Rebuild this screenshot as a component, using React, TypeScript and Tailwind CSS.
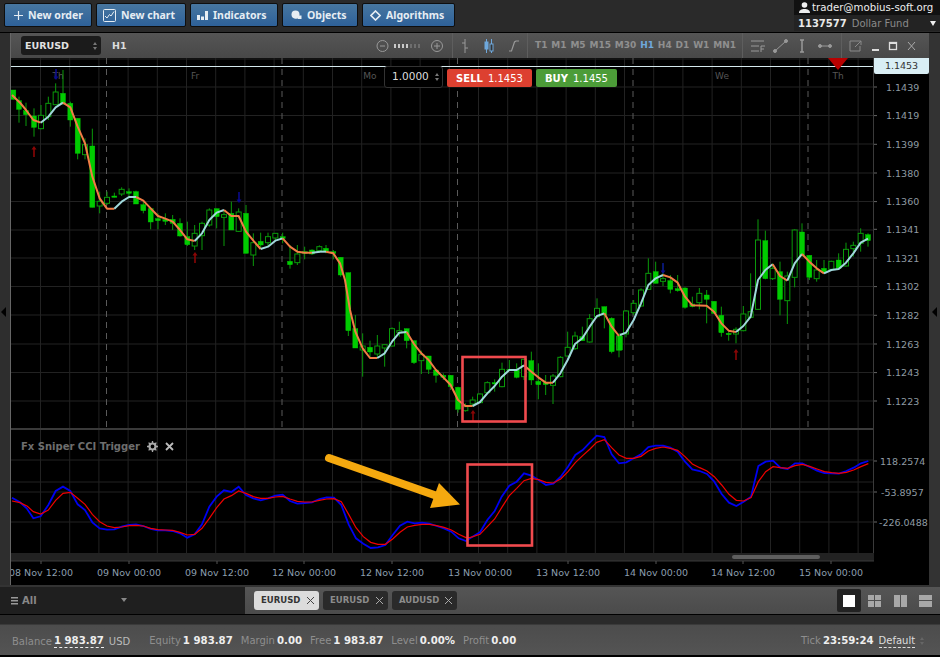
import React from "react";

type Candle = [number, number, number, number, number, number];
type Pt = [number, number];

// chart data is read off in 3x crop units, each section has its own origin
const toScreen = (ox: number, oy: number, rows: Candle[]) =>
  rows.map(([x, t, b, h, l, f]) => ({
    x: ox + x / 3,
    top: oy + t / 3,
    bottom: oy + b / 3,
    high: oy + h / 3,
    low: oy + l / 3,
    filled: f === 1,
  }));

const candles = [
  ...toScreen(0, 70, [
    [40, 60, 88, 60, 88, 1], [57, 92, 118, 80, 158, 1], [78, 122, 134, 98, 168, 1], [102, 138, 172, 115, 200, 1],
    [123, 136, 176, 105, 178, 0], [145, 100, 140, 80, 150, 0], [167, 66, 104, 40, 105, 0], [189, 70, 100, 0, 105, 1],
    [211, 100, 150, 95, 170, 1], [233, 145, 250, 145, 268, 1], [255, 224, 254, 205, 268, 0], [277, 228, 412, 176, 412, 1],
    [299, 394, 408, 365, 430, 0], [321, 382, 400, 365, 405, 0], [343, 378, 382, 368, 382, 1], [365, 358, 372, 352, 378, 0],
    [387, 365, 370, 355, 385, 1], [408, 365, 402, 362, 402, 1], [430, 404, 422, 396, 430, 1], [452, 416, 456, 416, 478, 1],
    [474, 446, 452, 430, 478, 1], [496, 448, 454, 430, 465, 1], [518, 448, 460, 435, 480, 1], [540, 460, 498, 445, 500, 1],
    [562, 500, 524, 455, 528, 1], [584, 490, 528, 465, 540, 0], [606, 460, 497, 455, 540, 0], [628, 420, 465, 415, 470, 0],
    [650, 416, 440, 416, 475, 1], [672, 434, 442, 420, 528, 0], [694, 430, 480, 395, 480, 1], [716, 426, 484, 415, 486, 0],
    [738, 430, 550, 405, 550, 1], [760, 518, 555, 490, 588, 0], [782, 514, 525, 488, 535, 1], [804, 500, 518, 488, 530, 0],
    [826, 490, 504, 490, 510, 0], [848, 500, 506, 488, 520, 1], [870, 574, 584, 525, 596, 1], [892, 552, 578, 525, 585, 0],
    [914, 545, 550, 530, 568, 1], [936, 540, 552, 538, 555, 1], [958, 530, 542, 526, 548, 0],
  ]),
  ...toScreen(320, 220, [
    [18, 85, 95, 75, 100, 1], [40, 95, 100, 90, 118, 1], [62, 112, 165, 112, 170, 1], [85, 158, 332, 158, 348, 1],
    [106, 326, 384, 285, 384, 1], [128, 378, 390, 340, 470, 0], [150, 382, 396, 362, 415, 1], [172, 378, 402, 345, 415, 0],
    [194, 374, 384, 374, 440, 0], [216, 326, 378, 322, 380, 0], [238, 332, 338, 305, 350, 0], [260, 326, 362, 326, 385, 1],
    [282, 362, 428, 362, 432, 1], [304, 404, 422, 392, 462, 0], [326, 408, 448, 408, 462, 1], [348, 450, 466, 448, 488, 1],
    [370, 466, 472, 460, 480, 1], [392, 466, 500, 465, 510, 1], [414, 502, 568, 500, 578, 1], [436, 560, 572, 550, 575, 0],
    [458, 540, 552, 530, 560, 0], [480, 522, 548, 520, 550, 0], [502, 488, 518, 484, 520, 0], [524, 488, 492, 478, 515, 1],
    [546, 448, 500, 428, 502, 0], [568, 448, 452, 420, 452, 1], [590, 450, 472, 430, 475, 1], [612, 418, 470, 418, 480, 0],
    [634, 422, 480, 395, 495, 1], [655, 484, 494, 430, 538, 1], [677, 488, 494, 465, 525, 1], [699, 468, 496, 462, 552, 0],
    [721, 412, 470, 408, 472, 0], [743, 382, 408, 335, 410, 0], [765, 348, 386, 335, 390, 0], [787, 350, 362, 320, 362, 1],
    [809, 296, 366, 282, 368, 0], [831, 265, 290, 235, 295, 0], [853, 260, 285, 260, 325, 1], [875, 295, 395, 292, 400, 1],
    [897, 348, 390, 340, 412, 0],
  ]),
  ...toScreen(620, 200, [
    [0, 408, 450, 400, 452, 1], [18, 333, 402, 330, 412, 0], [41, 310, 338, 300, 345, 0], [63, 270, 318, 265, 320, 0],
    [85, 220, 268, 175, 270, 0], [107, 215, 250, 185, 250, 1], [129, 236, 244, 190, 258, 0], [151, 242, 268, 225, 280, 1],
    [173, 266, 272, 225, 275, 1], [195, 264, 322, 262, 326, 1], [217, 312, 320, 290, 322, 1], [238, 280, 308, 264, 328, 0],
    [260, 285, 298, 270, 370, 1], [282, 304, 340, 304, 342, 1], [304, 346, 398, 320, 410, 1], [326, 400, 404, 395, 422, 1],
    [348, 388, 402, 382, 430, 0], [370, 342, 392, 318, 394, 0], [392, 335, 352, 220, 355, 0], [414, 120, 328, 58, 330, 0],
    [436, 122, 236, 92, 238, 1], [458, 205, 236, 190, 240, 0], [480, 215, 298, 185, 346, 1], [502, 228, 302, 215, 372, 0],
    [524, 90, 232, 88, 262, 0], [546, 96, 166, 70, 170, 1], [568, 166, 232, 166, 240, 1], [590, 210, 236, 180, 245, 0],
    [612, 205, 218, 180, 220, 1], [634, 184, 208, 182, 210, 0], [656, 180, 205, 160, 210, 1], [678, 148, 198, 128, 200, 0],
    [700, 136, 146, 125, 170, 0], [722, 100, 130, 85, 155, 0], [744, 104, 122, 100, 140, 1],
  ]),
];

const shift = (ox: number, oy: number, pts: Pt[]) =>
  pts.map(([x, y]) => `${ox + x / 3},${oy + y / 3}`).join(" ");

const ORANGE = "#f27c45";
const PALE = "#a0d8dc";

const trend: { color: string; points: string }[] = [
  { color: ORANGE, points: shift(0, 70, [[36, 75], [60, 98], [78, 120], [100, 150], [122, 158]]) },
  { color: PALE, points: shift(0, 70, [[122, 158], [145, 140], [167, 112], [189, 98]]) },
  { color: ORANGE, points: shift(0, 70, [[189, 98], [211, 112], [233, 170], [255, 220], [277, 320], [299, 385], [321, 416], [343, 416]]) },
  { color: PALE, points: shift(0, 70, [[343, 416], [365, 395], [387, 381], [408, 381]]) },
  { color: ORANGE, points: shift(0, 70, [[408, 381], [430, 392], [452, 415], [474, 438], [496, 446], [518, 455], [540, 480], [562, 508], [584, 513]]) },
  { color: PALE, points: shift(0, 70, [[584, 513], [606, 490], [628, 450], [650, 428], [672, 420]]) },
  { color: ORANGE, points: shift(0, 70, [[672, 420], [694, 438], [716, 438], [738, 485], [760, 512], [782, 537]]) },
  { color: PALE, points: shift(0, 70, [[782, 537], [804, 530], [826, 512], [848, 505]]) },
  { color: ORANGE, points: shift(0, 70, [[848, 505], [870, 530], [892, 545], [914, 548], [936, 548]]) },
  { color: PALE, points: shift(0, 70, [[936, 548], [960, 545]]) },
  { color: PALE, points: shift(320, 220, [[0, 95], [18, 95]]) },
  { color: ORANGE, points: shift(320, 220, [[18, 95], [40, 100], [60, 130], [75, 180], [90, 270], [106, 335], [128, 385], [150, 414], [172, 414]]) },
  { color: PALE, points: shift(320, 220, [[172, 414], [194, 400], [216, 365], [238, 338], [260, 336]]) },
  { color: ORANGE, points: shift(320, 220, [[260, 336], [282, 372], [304, 400], [326, 420], [348, 450], [370, 472], [392, 495], [414, 540], [436, 558], [458, 558]]) },
  { color: PALE, points: shift(320, 220, [[458, 558], [480, 546], [502, 520], [524, 498], [546, 470], [568, 450], [590, 450], [612, 436]]) },
  { color: ORANGE, points: shift(320, 220, [[612, 436], [634, 455], [655, 472], [677, 488], [699, 488]]) },
  { color: PALE, points: shift(320, 220, [[699, 488], [721, 460], [743, 420], [765, 372], [787, 355], [809, 320], [831, 288], [853, 280]]) },
  { color: ORANGE, points: shift(320, 220, [[853, 280], [875, 320], [897, 348]]) },
  { color: PALE, points: shift(620, 200, [[0, 405], [18, 398], [41, 360], [63, 310], [85, 255], [107, 235], [129, 225]]) },
  { color: ORANGE, points: shift(620, 200, [[129, 225], [151, 232], [173, 248], [195, 290], [217, 316], [260, 317], [282, 335], [304, 370], [326, 392], [348, 396]]) },
  { color: PALE, points: shift(620, 200, [[348, 396], [370, 378], [392, 350], [414, 240], [436, 210], [458, 193]]) },
  { color: ORANGE, points: shift(620, 200, [[458, 193], [480, 228], [502, 242]]) },
  { color: PALE, points: shift(620, 200, [[502, 242], [524, 190], [546, 162]]) },
  { color: ORANGE, points: shift(620, 200, [[546, 162], [568, 185], [590, 205], [612, 220]]) },
  { color: PALE, points: shift(620, 200, [[612, 220], [634, 210], [656, 207], [678, 188], [700, 160], [722, 128], [744, 116]]) },
];

const cciBlue =
  shift(0, 425, [[36, 218], [60, 232], [80, 250], [100, 280], [122, 274], [145, 240], [167, 198], [189, 185], [211, 198], [233, 238], [255, 255], [277, 292], [299, 310], [321, 314], [343, 313], [365, 305], [387, 300], [408, 298], [430, 303], [452, 312], [474, 316], [496, 316], [518, 318], [540, 325], [562, 338], [584, 328], [606, 298], [628, 245], [650, 215], [672, 196], [694, 201], [716, 185], [738, 210], [760, 220], [782, 226], [804, 220], [826, 212], [848, 209], [870, 228], [892, 236], [914, 234], [936, 232], [958, 222], [980, 217], [1002, 218], [1024, 240], [1046, 298], [1068, 340], [1090, 356], [1112, 369], [1134, 367], [1156, 360], [1178, 330], [1200, 302], [1222, 290], [1244, 295], [1266, 293], [1288, 296], [1310, 303], [1332, 310], [1354, 320], [1376, 340], [1398, 348]]) +
  " " +
  shift(470, 425, [[0, 340], [30, 322], [52, 285], [74, 258], [95, 215], [118, 182], [140, 170], [162, 145], [184, 152], [206, 165], [228, 180], [250, 176], [272, 155], [294, 125], [316, 90], [338, 75], [360, 52], [380, 32], [403, 36], [425, 88], [447, 115], [469, 112], [491, 100], [513, 88], [535, 66], [557, 62], [579, 62], [601, 68], [623, 80], [645, 110], [667, 133], [689, 138], [711, 147], [733, 170], [755, 207], [777, 233], [799, 243], [821, 230], [843, 215], [865, 123], [887, 110], [909, 107], [931, 128], [953, 132], [975, 115], [997, 115], [1019, 126], [1041, 137], [1063, 144], [1085, 145], [1107, 146], [1129, 138], [1151, 128], [1173, 115], [1195, 108]]);

const cciRed =
  shift(0, 425, [[36, 228], [60, 233], [82, 244], [100, 260], [122, 267], [145, 255], [167, 226], [189, 205], [211, 202], [233, 220], [255, 238], [277, 268], [299, 290], [321, 303], [343, 308], [365, 306], [387, 302], [408, 301], [430, 303], [452, 310], [474, 314], [496, 315], [518, 316], [540, 322], [562, 330], [584, 328], [606, 310], [628, 280], [650, 248], [672, 222], [694, 212], [716, 198], [738, 205], [760, 215], [782, 220], [804, 220], [826, 216], [848, 214], [870, 222], [892, 229], [914, 231], [936, 231], [958, 226], [980, 222], [1002, 221], [1024, 230], [1046, 268], [1068, 308], [1090, 335], [1112, 352], [1134, 358], [1156, 358], [1178, 342], [1200, 322], [1222, 306], [1244, 301], [1266, 298], [1288, 298], [1310, 302], [1332, 307], [1354, 315], [1376, 328], [1398, 338]]) +
  " " +
  shift(470, 425, [[0, 338], [30, 328], [52, 305], [74, 282], [95, 248], [118, 212], [140, 190], [162, 167], [184, 160], [206, 164], [228, 172], [250, 174], [272, 162], [294, 140], [316, 113], [338, 92], [360, 72], [380, 52], [403, 44], [425, 68], [447, 90], [469, 100], [491, 100], [513, 94], [535, 78], [557, 70], [579, 66], [601, 70], [623, 76], [645, 95], [667, 117], [689, 128], [711, 138], [733, 155], [755, 180], [777, 208], [799, 226], [821, 228], [843, 218], [865, 170], [887, 140], [909, 125], [931, 128], [953, 130], [975, 122], [997, 118], [1019, 124], [1041, 132], [1063, 140], [1085, 143], [1107, 145], [1129, 142], [1151, 135], [1173, 125], [1195, 116]]);

const prices: [string, number][] = [
  ["1.1439", 87], ["1.1419", 115.6], ["1.1399", 144.3], ["1.1380", 173], ["1.1360", 201.6], ["1.1341", 229.3],
  ["1.1321", 258], ["1.1302", 286.6], ["1.1282", 315.3], ["1.1263", 344], ["1.1243", 372.6], ["1.1223", 401],
];
const hGrid = [59, 87, 115.5, 144, 173, 201.5, 230, 258, 286.5, 315, 344, 372.5, 401, 460, 482, 492, 522];
const vGrid = Array.from({ length: 29 }, (_, i) => 40.5 + i * 29.2);
const dayLines = [106.5, 282, 457.5, 633, 808];
const days: [string, number][] = [["Th", 58], ["Fr", 195], ["Mo", 370], ["We", 722], ["Th", 838]];
const times: [string, number][] = [
  ["08 Nov 12:00", 41], ["09 Nov 00:00", 129], ["09 Nov 12:00", 217], ["12 Nov 00:00", 304], ["12 Nov 12:00", 392],
  ["13 Nov 00:00", 480], ["13 Nov 12:00", 568], ["14 Nov 00:00", 656], ["14 Nov 12:00", 743], ["15 Nov 00:00", 831],
];
const upArrows: [number, number][] = [[34, 146], [195, 252], [473, 410], [736, 349]];
const downArrows: [number, number][] = [[56, 69], [239, 192], [663, 263]];

function Chart() {
  return (
    <svg viewBox="11 58 918 527" className="absolute inset-0 w-[918px] h-[527px] font-['DejaVu_Sans']">
      {hGrid.map((y) => (
        <line key={y} x1={11} x2={873} y1={y} y2={y} stroke="#222" />
      ))}
      {vGrid.map((x) => (
        <line key={x} x1={x} x2={x} y1={58} y2={553} stroke="#222" />
      ))}
      {dayLines.map((x) => (
        <line key={x} x1={x} x2={x} y1={58} y2={428} stroke="#5a5a5a" strokeDasharray="6 5" />
      ))}
      {days.map(([d, x]) => (
        <text key={x} x={x} y={79} textAnchor="middle" fontSize={9} fill="#565656">
          {d}
        </text>
      ))}

      {candles.map((c, i) => (
        <g key={i}>
          <line x1={c.x} x2={c.x} y1={c.high} y2={c.low} stroke="#0a9a0a" />
          <rect
            x={c.x - 2.5}
            y={c.top}
            width={5}
            height={Math.max(c.bottom - c.top, 1)}
            fill={c.filled ? "#00cc00" : "#000"}
            stroke={c.filled ? "#00cc00" : "#0a9a0a"}
            strokeWidth={c.filled ? 0.4 : 1}
          />
        </g>
      ))}
      {trend.map((t, i) => (
        <polyline key={i} points={t.points} fill="none" stroke={t.color} strokeWidth={2} strokeLinejoin="round" />
      ))}

      {upArrows.map(([x, y]) => (
        <path key={x} d={`M${x} ${y}l-2.5 3.5h1.7v7.5h1.6v-7.5h1.7z`} fill="#8a0606" />
      ))}
      {downArrows.map(([x, y]) => (
        <path key={x} d={`M${x} ${y + 11}l-2.5 -3.5h1.7v-7.5h1.6v7.5h1.7z`} fill="#0a0a8c" />
      ))}

      <line x1={11} x2={873} y1={66.5} y2={66.5} stroke="#d4e8ec" />
      <path d="M828 58h20l-10 12z" fill="#b80000" />

      {/* axes */}
      <line x1={873.5} x2={873.5} y1={58} y2={561} stroke="#3a3a3a" />
      <rect x={11} y={428} width={863} height={2} fill="#3a3a3a" />
      <rect x={11} y={553} width={863} height={8} fill="#222" />
      <rect x={732} y={555} width={88} height={4} rx={2} fill="#5e5e5e" />
      <line x1={11} x2={874} y1={561} y2={561} stroke="#3a3a3a" />
      {prices.map(([p, y]) => (
        <g key={p}>
          <line x1={874} x2={877} y1={y} y2={y} stroke="#666" />
          <text x={886} y={y + 3.5} fontSize={9.5} fill="#8f9ba3">
            {p}
          </text>
        </g>
      ))}
      {([["118.2574", 461, 880], ["-53.8957", 492, 881], ["-226.0488", 522, 879]] as [string, number, number][]).map(
        ([p, y, x]) => (
          <g key={p}>
            <line x1={874} x2={877} y1={y} y2={y} stroke="#666" />
            <text x={x} y={y + 3.5} fontSize={9.5} fill="#8f9ba3">
              {p}
            </text>
          </g>
        ),
      )}
      {times.map(([t, x]) => (
        <g key={t}>
          <line x1={x} x2={x} y1={561} y2={564} stroke="#555" />
          <text x={x} y={576} textAnchor="middle" fontSize={9.5} fill="#8b9eae">
            {t}
          </text>
        </g>
      ))}

      {/* indicator */}
      <polyline points={cciBlue} fill="none" stroke="#0000f0" strokeWidth={1.8} />
      <polyline points={cciRed} fill="none" stroke="#f00000" strokeWidth={1.2} />

      {/* annotations */}
      <rect x={462.5} y={357} width={63} height={64.5} fill="none" stroke="#f04a4e" strokeWidth={2.6} />
      <rect x={467.5} y={464.5} width={64.5} height={81} fill="none" stroke="#f04a4e" strokeWidth={2.6} />
      <line x1={329} y1={458} x2={440} y2={497} stroke="#f5a90f" strokeWidth={8} strokeLinecap="round" />
      <path d="M439 483L460 504.5L430 508z" fill="#f5a90f" />
    </svg>
  );
}

function ToolButton({ icon, label, className }: { icon: React.ReactNode; label: string; className: string }) {
  return (
    <button
      className={`h-[24px] flex items-center gap-[5px] rounded-[2px] border border-[#0e0e0e] bg-gradient-to-b from-[#47769f] to-[#2e6199] font-['Noto_Sans'] text-[10.5px] font-bold text-[#e6edf3] ${className}`}
    >
      {icon}
      <span className="mt-px">{label}</span>
    </button>
  );
}

function Stat({ label, value, className = "" }: { label: string; value: string; className?: string }) {
  return (
    <span className={`flex items-baseline gap-[2px] ${className}`}>
      <span className="text-[10px] text-[#8e8e8e]">{label}</span>
      <span className="text-[10.2px] font-bold text-[#eeeeee]">{value}</span>
    </span>
  );
}

const frames = ["T1", "M1", "M5", "M15", "M30", "H1", "H4", "D1", "W1", "MN1"];

export default function App() {
  return (
    <div className="w-[940px] h-[657px] overflow-hidden bg-black flex flex-col font-['DejaVu_Sans',sans-serif] text-[10px]">
      {/* Top toolbar */}
      <div className="h-[32px] flex items-start bg-[#2a2a2a] pl-[4px] pt-[3px] gap-[4px] relative">
        <ToolButton
          className="w-[88px] pl-[9px]"
          label="New order"
          icon={
            <svg width="9" height="9" viewBox="0 0 9 9" className="mt-[1px]">
              <path d="M4.5 0v9M0 4.5h9" stroke="#e6edf3" strokeWidth="1.2" />
            </svg>
          }
        />
        <ToolButton
          className="w-[90px] pl-[6px]"
          label="New chart"
          icon={
            <svg width="13" height="13" viewBox="0 0 13 13" fill="none" stroke="#e6edf3">
              <rect x=".5" y=".5" width="12" height="12" rx="1" />
              <path d="M2 7l2 2 2.5-3.5L8 7l3-4.5" />
            </svg>
          }
        />
        <ToolButton
          className="w-[88px] pl-[6px]"
          label="Indicators"
          icon={
            <svg width="11" height="10" viewBox="0 0 11 10" fill="#e6edf3">
              <rect y="5" width="3" height="5" />
              <rect x="4" y="6.5" width="3" height="3.5" />
              <rect x="8" y="1" width="3" height="9" />
            </svg>
          }
        />
        <ToolButton
          className="w-[76px] pl-[8px]"
          label="Objects"
          icon={
            <svg width="11" height="11" viewBox="0 0 11 11" fill="#e6edf3">
              <circle cx="4.5" cy="4.5" r="4" />
              <path d="M7 5.5h3.5V9H3.5V8.5H7z" />
            </svg>
          }
        />
        <ToolButton
          className="w-[93px] pl-[7px]"
          label="Algorithms"
          icon={
            <svg width="11" height="11" viewBox="0 0 11 11" fill="none" stroke="#e6edf3" strokeWidth="1.6">
              <path d="M5.5 1L10 5.5 5.5 10 1 5.5z" />
            </svg>
          }
        />
        <div className="absolute right-0 top-0 w-[146px] h-[31px] flex flex-col">
          <div className="h-[15px] bg-[#111] flex items-center pl-[5px] gap-[2px] text-[10.2px] text-[#eee]">
            <svg width="11" height="11" viewBox="0 0 11 11" fill="#eee">
              <circle cx="5.5" cy="3" r="2.8" />
              <path d="M0 11c0-3 2.5-4 5.5-4s5.5 1 5.5 4z" />
            </svg>
            trader@mobius-soft.org
          </div>
          <div className="h-[16px] bg-[#232323] flex items-center pl-[4px] text-[10px] relative">
            <span className="font-bold text-[#e8e8e8]">1137577</span>
            <span className="ml-[5px] text-[#8a8a8a]">Dollar Fund</span>
            <span className="absolute right-[4px] top-[6px] border-x-[3.5px] border-x-transparent border-t-[5px] border-t-[#eee]" />
          </div>
        </div>
      </div>
      <div className="h-px bg-black" />

      {/* Chart window */}
      <div className="flex h-[552px] shrink-0">
        <div className="w-[11px] bg-[#2e2e2e] border-r border-[#666] flex items-center justify-center">
          <span className="mt-[6px] mr-[3px] border-y-[5px] border-y-transparent border-r-[5px] border-r-black" />
        </div>
        <div className="w-[918px] flex flex-col">
          {/* Chart header */}
          <div className="h-[25px] shrink-0 bg-gradient-to-b from-[#555] to-[#484848] flex items-center text-[#8f8f8f] relative">
            <div className="ml-[10px] w-[80px] h-[19px] bg-[#1b1b1b] rounded-[3px] flex items-center justify-between pl-[4px] pr-[4px] text-[9.5px] font-bold text-[#e2e2e2]">
              <span className="mt-px">EURUSD</span>
              <span className="flex flex-col gap-[2px]">
                <span className="border-x-[2.5px] border-x-transparent border-b-[3px] border-b-[#777]" />
                <span className="border-x-[2.5px] border-x-transparent border-t-[3px] border-t-[#777]" />
              </span>
            </div>
            <span className="ml-[11px] mt-px text-[9.5px] font-bold text-[#ddd]">H1</span>

            <div className="absolute left-[365px] top-0 h-[25px] flex items-center">
              <svg width="72" height="14" viewBox="0 0 72 14" fill="none" stroke="#999">
                <circle cx="6.5" cy="7" r="5.5" />
                <path d="M4 7h5" />
                <path d="M19 5v4M23 5v4M27 5v4M31 5v4" stroke="#e8e8e8" strokeWidth="1.6" />
                <path d="M35 5v4M39 5v4M43 5v4" stroke="#777" strokeWidth="1.6" />
                <circle cx="61" cy="7" r="5.5" />
                <path d="M58 7h6M61 4v6" />
              </svg>
            </div>
            <div className="absolute left-[441px] top-0 w-[76px] h-[25px] border-x border-[#5e5e5e] flex items-center">
              <svg width="74" height="16" viewBox="0 0 74 16" fill="none">
                <path d="M12 1v14M9 5h3M12 10h3" stroke="#999" />
                <path d="M33.5 1v14M38.5 1v14" stroke="#6fa8dc" />
                <rect x="32" y="4" width="3" height="7" fill="#6fa8dc" stroke="#6fa8dc" />
                <rect x="37" y="6" width="3" height="7" fill="#333" stroke="#6fa8dc" />
                <path d="M56 13h2.5l3-9 1.500-1h3" stroke="#999" strokeWidth="1.2" />
              </svg>
            </div>
            <div className="absolute left-[518px] top-0 w-[213px] h-[25px] flex items-center justify-between pl-[6px] pr-[6px] font-bold text-[9px]">
              {frames.map((f) => (
                <span key={f} className={f === "H1" ? "text-[#6fa8dc]" : "text-[#8f8f8f]"}>
                  {f}
                </span>
              ))}
            </div>
            <div className="absolute left-[731px] top-0 w-[100px] h-[25px] border-x border-[#5e5e5e] flex items-center pl-[5px]">
              <svg width="92" height="14" viewBox="0 0 92 14" fill="none" stroke="#999">
                <path d="M3 2h13M3 7h8M3 12h8" />
                <path d="M13 7h4M13 7v6M13 10h3" />
                <circle cx="27" cy="12" r="1.5" fill="#999" />
                <circle cx="38" cy="2" r="1.5" fill="#999" />
                <path d="M27 12L38 2" />
                <path d="M52 1h4M52 13h4M54 1v12" strokeWidth="1.5" />
                <path d="M71 7h12" />
                <circle cx="72" cy="7" r="1.5" fill="#999" />
                <circle cx="82" cy="7" r="1.5" fill="#999" />
              </svg>
            </div>
            <div className="absolute left-[837px] top-0 h-[25px] flex items-center">
              <svg width="76" height="14" viewBox="0 0 76 14" fill="none">
                <path d="M9 2H2v10h10V7M7 8l6-6M9 2h4v4" stroke="#8a8a8a" />
                <path d="M24 11h7" stroke="#ddd" strokeWidth="2" />
                <rect x="41.5" y="3.5" width="7" height="7" stroke="#ddd" strokeWidth="1.3" />
                <path d="M41 4h8" stroke="#ddd" strokeWidth="2" />
                <path d="M60 3l7 8M67 3l-7 8" stroke="#aaa" />
              </svg>
            </div>
          </div>

          {/* Chart area */}
          <div className="h-[527px] relative bg-black">
            <Chart />
            <div className="absolute left-[373px] top-[8px] w-[59px] h-[22px] bg-black border border-[#333] rounded-[3px] flex items-center justify-between pl-[7px] pr-[3px] text-[10.5px] text-[#ddd]">
              1.0000
              <span className="flex flex-col gap-[2px]">
                <span className="border-x-[2.5px] border-x-transparent border-b-[3px] border-b-[#777]" />
                <span className="border-x-[2.5px] border-x-transparent border-t-[3px] border-t-[#777]" />
              </span>
            </div>
            <div className="absolute left-[436px] top-[11px] w-[85px] h-[18px] bg-[#dd4030] rounded-[2px] flex items-center justify-center gap-[5px] text-[10px] text-white">
              <b>SELL</b> 1.1453
            </div>
            <div className="absolute left-[525px] top-[11px] w-[81px] h-[18px] bg-[#4c9c38] rounded-[2px] flex items-center justify-center gap-[5px] text-[10px] text-white">
              <b>BUY</b> 1.1455
            </div>
            <div className="absolute left-[863px] top-0 w-[55px] h-[16px] bg-[#d9eef4] rounded-b-[2px] flex items-center justify-center text-[9.5px] text-[#333]">
              1.1453
            </div>
            <div className="absolute left-[10px] top-[381px] flex items-center gap-[7px] text-[#777]">
              <span className="font-bold text-[10px] text-[#6e6e6e]">Fx Sniper CCI Trigger</span>
              <svg width="11" height="11" viewBox="0 0 11 11" fill="none" stroke="#aaa" strokeWidth="2.2">
                <circle cx="5.5" cy="5.5" r="3" />
                <path d="M5.5 0v2M5.5 9v2M0 5.5h2M9 5.5h2M1.6 1.6L3 3M8 8l1.4 1.4M1.6 9.4L3 8M8 3l1.4-1.4" strokeWidth="1.3" />
              </svg>
              <svg width="9" height="9" viewBox="0 0 9 9" stroke="#bbb" strokeWidth="1.8">
                <path d="M1 1l7 7M8 1l-7 7" />
              </svg>
            </div>
          </div>
        </div>
        <div className="w-[11px] bg-[#333] flex items-center justify-center">
          <span className="mt-[6px] border-y-[5px] border-y-transparent border-r-[5px] border-r-black" />
        </div>
      </div>

      <div className="h-[2px] bg-[#333]" />

      {/* Tabs bar */}
      <div className="h-[27px] flex shrink-0">
        <div className="w-[245px] bg-[#1f1f1f] flex items-center pl-[11px] text-[#888] font-bold text-[10px] relative">
          <svg width="7" height="8" viewBox="0 0 7 8" fill="#999" className="mr-[4px]">
            <rect width="7" height="1.5" />
            <rect y="3" width="7" height="1.5" />
            <rect y="6" width="7" height="1.5" />
          </svg>
          All
          <span className="absolute left-[121px] top-[11px] border-x-[3.5px] border-x-transparent border-t-[4px] border-t-[#888]" />
        </div>
        <div className="flex-1 bg-gradient-to-b from-[#555] to-[#4b4b4b] flex items-center pl-[9px] gap-[4px] relative">
          {["EURUSD", "EURUSD", "AUDUSD"].map((t, i) => (
            <div
              key={i}
              className={`w-[65px] h-[19px] rounded-[3px] flex items-center justify-between pl-[7px] pr-[5px] text-[8.5px] font-bold ${
                i === 0 ? "bg-[#dcdcdc] text-[#333]" : "bg-[#2a2a2a] text-[#8c8c8c]"
              }`}
            >
              {t}
              <svg width="7" height="7" viewBox="0 0 7 7" stroke={i === 0 ? "#444" : "#aaa"}>
                <path d="M0 0l7 7M7 0L0 7" />
              </svg>
            </div>
          ))}
          <div className="absolute left-[592px] top-[2px] flex items-center gap-[7px]">
            <div className="w-[24px] h-[23px] bg-[#222] rounded-[2px] flex items-center justify-center">
              <span className="w-[12px] h-[12px] bg-white" />
            </div>
            <div className="grid grid-cols-2 gap-px w-[13px] h-[12px]">
              <span className="bg-[#a8a8a8]" />
              <span className="bg-[#a8a8a8]" />
              <span className="bg-[#a8a8a8]" />
              <span className="bg-[#a8a8a8]" />
            </div>
            <div className="ml-[6px] grid grid-cols-2 gap-px w-[13px] h-[12px]">
              <span className="bg-[#a8a8a8]" />
              <span className="bg-[#a8a8a8]" />
            </div>
            <div className="ml-[5px] grid grid-rows-2 gap-px w-[13px] h-[12px]">
              <span className="bg-[#a8a8a8]" />
              <span className="bg-[#a8a8a8]" />
            </div>
          </div>
        </div>
      </div>
      <div className="h-px bg-black" />
      <div className="h-[9px] bg-[#2a2a2a]" />
      <div className="h-px bg-[#3a3a3a]" />

      {/* Status bar */}
      <div className="h-[30px] shrink-0 pt-[2px] bg-gradient-to-b from-[#4c4c4c] to-[#545454] flex items-center text-[10px] relative">
        <span className="ml-[12px] text-[#8e8e8e]">Balance</span>
        <span className="ml-[2px] text-[10.2px] font-bold text-[#eee] border-b border-dashed border-[#eee] leading-[12px]">1 983.87</span>
        <span className="ml-[5px] text-[#bbb]">USD</span>
        <Stat className="ml-[19px]" label="Equity" value="1 983.87" />
        <Stat className="ml-[8px]" label="Margin" value="0.00" />
        <Stat className="ml-[8px]" label="Free" value="1 983.87" />
        <Stat className="ml-[8px]" label="Level" value="0.00%" />
        <Stat className="ml-[8px]" label="Profit" value="0.00" />
        <div className="absolute left-[801px] top-[2px] h-[28px] flex items-center">
          <Stat label="Tick" value="23:59:24" />
          <span className="ml-[5px] text-[#ddd] border-b border-dashed border-[#ddd] leading-[12px]">Default</span>
          <span className="ml-[5px] flex flex-col gap-[2px]">
            <span className="border-x-[2.5px] border-x-transparent border-b-[3px] border-b-[#666]" />
            <span className="border-x-[2.5px] border-x-transparent border-t-[3px] border-t-[#666]" />
          </span>
        </div>
      </div>
      <div className="flex-1 bg-black" />
    </div>
  );
}
